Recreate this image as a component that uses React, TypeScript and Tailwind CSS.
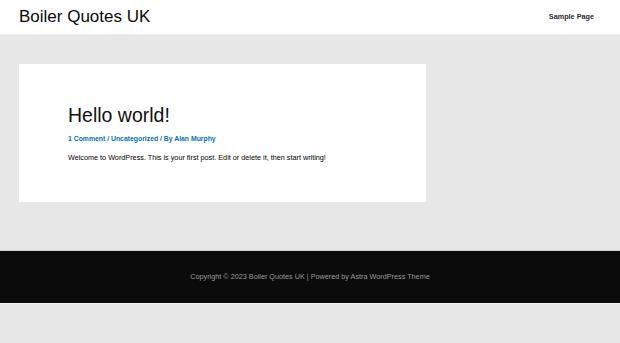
export default function App() {
  const font = { fontFamily: '"Liberation Sans", Arial, Helvetica, sans-serif' };
  return (
    <div className="min-h-[343px] w-full bg-[#e7e7e7]" style={font}>
      <header className="flex h-[35px] items-start justify-between border-b border-[#ececec] bg-white pl-[19px] pr-[26px]">
        <div className="h-[34px] text-[17px] leading-[34px] text-[#0a0a0a]">Boiler Quotes UK</div>
        <nav className="flex h-[34px] items-center">
          <span className="text-[7.25px] font-bold text-[#2a2a2a]">Sample Page</span>
        </nav>
      </header>
      <main className="pl-[19px] pr-[194px] pt-[29px] pb-[48px]">
        <article className="bg-white pl-[49px] pr-[20px] pt-[40px] pb-[39px]">
          <h1 className="text-[19.5px] leading-[23px] text-[#111]">Hello world!</h1>
          <div className="mt-[6.5px] text-[6.85px] leading-[10px] font-bold text-[#0170b9]">
            1 Comment / Uncategorized / By Alan Murphy
          </div>
          <p className="mt-[8.5px] text-[7.25px] leading-[11px] text-[#000]">
            Welcome to WordPress. This is your first post. Edit or delete it, then start writing!
          </p>
        </article>
      </main>
      <footer className="flex h-[54px] items-center justify-center border-t border-[#cfcfcf] border-b border-b-[#f4f4f4] bg-[#0b0b0b]">
        <span className="text-[7.25px] text-[#9a9a9a]">
          Copyright © 2023 Boiler Quotes UK | Powered by Astra WordPress Theme
        </span>
      </footer>
    </div>
  );
}
